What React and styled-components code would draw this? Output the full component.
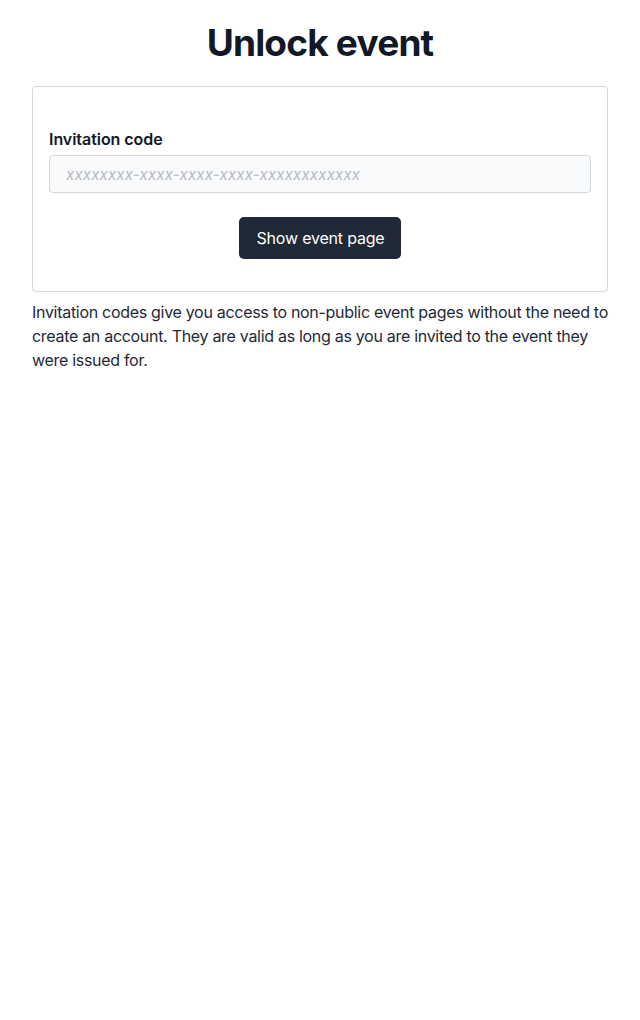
import React from "react";
import styled, { createGlobalStyle } from "styled-components";

const Global = createGlobalStyle`
  html, body { margin: 0; padding: 0; background: #fff; }
  body { font-family: Inter, "Noto Sans", sans-serif; color: #111827; }
  * { box-sizing: border-box; }
`;

const Page = styled.main`
  padding: 20px 32px 32px;
`;

const Title = styled.h1`
  margin: 0 0 20px;
  text-align: center;
  font-size: 37px;
  line-height: 46px;
  font-weight: 700;
  letter-spacing: -0.8px;
  color: #111827;
`;

const Card = styled.form`
  border: 1px solid #d1d5db;
  border-radius: 4px;
  padding: 40px 16px 32px;
  display: flex;
  flex-direction: column;
`;

const Label = styled.label`
  font-size: 16px;
  font-weight: 600;
  line-height: 24px;
  letter-spacing: -0.05px;
  color: #111827;
  margin-bottom: 4px;
`;

const Input = styled.input`
  height: 38px;
  width: 100%;
  border: 1px solid #d1d5db;
  border-radius: 4px;
  background: #f9fafb;
  padding: 0 16px;
  font-family: inherit;
  font-size: 15px;
  color: #111827;
  &::placeholder {
    color: #b5bac3;
    font-style: italic;
    letter-spacing: 0.2px;
  }
`;

const Actions = styled.div`
  display: flex;
  justify-content: center;
  margin-top: 24px;
`;

const Button = styled.button`
  height: 42px;
  padding: 0 17px 0 18px;
  border: none;
  border-radius: 5px;
  background: #1f2937;
  color: #fff;
  font-family: inherit;
  font-size: 16px;
  letter-spacing: -0.2px;
  cursor: pointer;
`;

const Note = styled.p`
  margin: 8px 0 0;
  font-size: 16px;
  line-height: 24px;
  letter-spacing: -0.3px;
  color: #1f2937;
`;

export default function App() {
  return (
    <>
      <Global />
      <Page>
        <Title>Unlock event</Title>
        <Card onSubmit={(e) => e.preventDefault()}>
          <Label htmlFor="code">Invitation code</Label>
          <Input id="code" placeholder="xxxxxxxx-xxxx-xxxx-xxxx-xxxxxxxxxxxx" />
          <Actions>
            <Button type="submit">Show event page</Button>
          </Actions>
        </Card>
        <Note>
          Invitation codes give you access to non-public event pages without the need to
          create an account. They are valid as long as you are invited to the event they
          were issued for.
        </Note>
      </Page>
    </>
  );
}
